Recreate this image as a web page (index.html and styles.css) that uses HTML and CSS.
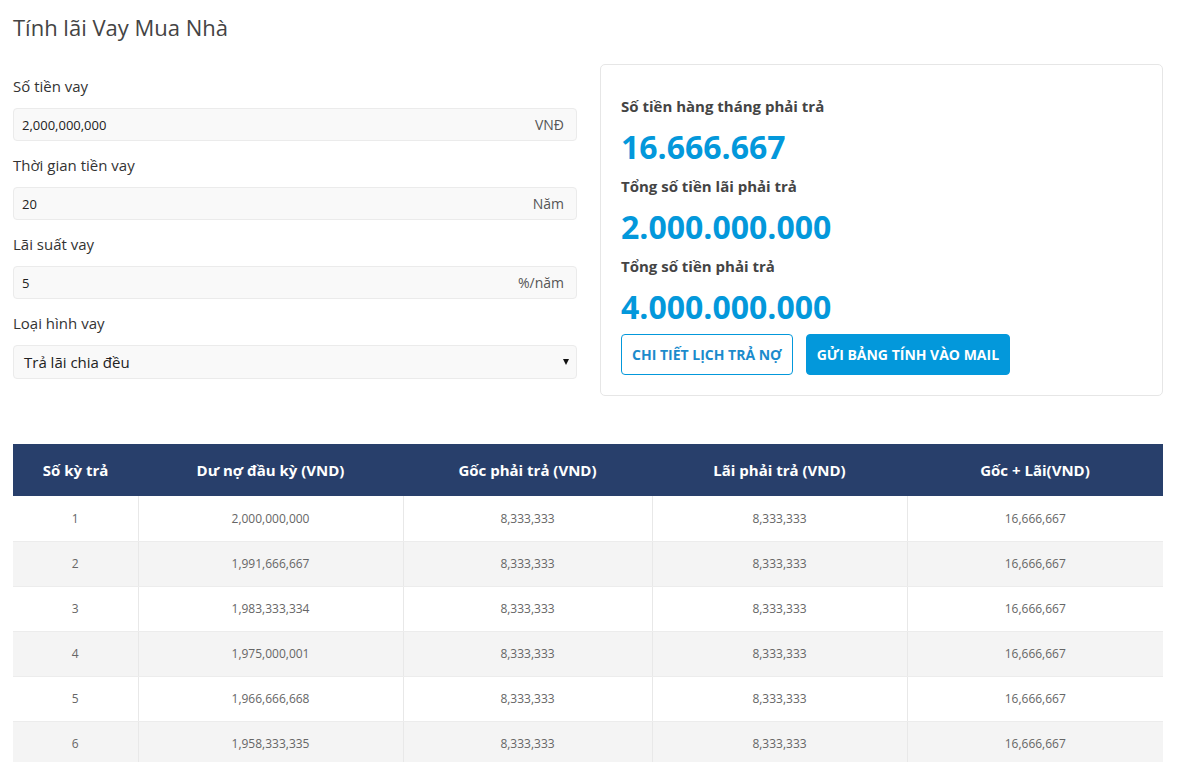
FILE: index.html
```html
<!DOCTYPE html>
<html lang="vi">
<head>
<meta charset="utf-8">
<title>Tính lãi Vay Mua Nhà</title>
<link rel="stylesheet" href="styles.css">
</head>
<body>
<div class="page">
  <h1 class="title">Tính lãi Vay Mua Nhà</h1>
  <div class="calc">
    <div class="form">
      <div class="field">
        <label class="label">Số tiền vay</label>
        <div class="input"><span class="value">2,000,000,000</span><span class="unit">VNĐ</span></div>
      </div>
      <div class="field">
        <label class="label">Thời gian tiền vay</label>
        <div class="input"><span class="value">20</span><span class="unit">Năm</span></div>
      </div>
      <div class="field">
        <label class="label">Lãi suất vay</label>
        <div class="input"><span class="value">5</span><span class="unit">%/năm</span></div>
      </div>
      <div class="field">
        <label class="label">Loại hình vay</label>
        <div class="select"><span class="select-value">Trả lãi chia đều</span><span class="caret"></span></div>
      </div>
    </div>
    <div class="card">
      <div class="res-label">Số tiền hàng tháng phải trả</div>
      <div class="res-value">16.666.667</div>
      <div class="res-label">Tổng số tiền lãi phải trả</div>
      <div class="res-value">2.000.000.000</div>
      <div class="res-label">Tổng số tiền phải trả</div>
      <div class="res-value last">4.000.000.000</div>
      <div class="buttons">
        <button class="btn btn-outline">CHI TIẾT LỊCH TRẢ NỢ</button>
        <button class="btn btn-solid">GỬI BẢNG TÍNH VÀO MAIL</button>
      </div>
    </div>
  </div>
  <table class="schedule">
    <colgroup>
      <col class="c1"><col class="c2"><col class="c3"><col class="c4"><col class="c5">
    </colgroup>
    <thead>
      <tr><th>Số kỳ trả</th><th>Dư nợ đầu kỳ (VND)</th><th>Gốc phải trả (VND)</th><th>Lãi phải trả (VND)</th><th>Gốc + Lãi(VND)</th></tr>
    </thead>
    <tbody>
      <tr><td>1</td><td>2,000,000,000</td><td>8,333,333</td><td>8,333,333</td><td>16,666,667</td></tr>
      <tr><td>2</td><td>1,991,666,667</td><td>8,333,333</td><td>8,333,333</td><td>16,666,667</td></tr>
      <tr><td>3</td><td>1,983,333,334</td><td>8,333,333</td><td>8,333,333</td><td>16,666,667</td></tr>
      <tr><td>4</td><td>1,975,000,001</td><td>8,333,333</td><td>8,333,333</td><td>16,666,667</td></tr>
      <tr><td>5</td><td>1,966,666,668</td><td>8,333,333</td><td>8,333,333</td><td>16,666,667</td></tr>
      <tr><td>6</td><td>1,958,333,335</td><td>8,333,333</td><td>8,333,333</td><td>16,666,667</td></tr>
    </tbody>
  </table>
</div>
</body>
</html>
```
FILE: styles.css
```css
* { box-sizing: border-box; }
html, body { margin: 0; padding: 0; background: #fff; }
body {
  font-family: "Open Sans", "Liberation Sans", Arial, sans-serif;
  color: #333;
}
.page { padding: 0 18px 0 13px; }
.title {
  margin: 12px 0 0;
  font-size: 22px;
  line-height: 30px;
  font-weight: 400;
  color: #444;
}
.calc {
  display: grid;
  grid-template-columns: 564px 563px;
  column-gap: 23px;
  margin-top: 22px;
  align-items: start;
}
.form { padding-top: 11px; }
.field { margin-bottom: 13px; }
.label {
  display: block;
  font-size: 15px;
  line-height: 22px;
  color: #333;
  margin-bottom: 11px;
}
.input, .select {
  display: flex;
  align-items: center;
  justify-content: space-between;
  height: 33px;
  background: #f9f9f9;
  border: 1px solid #ebebeb;
  border-radius: 4px;
  padding: 0 12px 0 8px;
}
.value { font-size: 13px; color: #222; }
.unit { font-size: 14px; color: #555; }
.select { height: 34px; padding: 0 6px 0 10px; }
.select-value { font-size: 15px; color: #222; }
.caret {
  width: 0; height: 0;
  border-left: 3.5px solid transparent;
  border-right: 3.5px solid transparent;
  border-top: 6px solid #111;
  margin-right: 1px;
}
.card {
  border: 1px solid #e6e6e6;
  border-radius: 5px;
  padding: 30px 20px 19px;
  height: 332px;
}
.res-label {
  font-size: 15px;
  line-height: 22px;
  font-weight: 700;
  color: #444;
  margin-bottom: 8px;
}
.res-value {
  font-size: 32px;
  line-height: 44px;
  font-weight: 700;
  color: #0398db;
  margin-bottom: 6px;
}
.res-value.last { margin-bottom: 5px; }
.buttons { display: flex; gap: 13px; }
.btn {
  font-family: inherit;
  height: 41px;
  font-size: 14px;
  font-weight: 700;
  border-radius: 4px;
  padding: 0 10px;
  cursor: pointer;
}
.btn-outline {
  background: #fff;
  border: 1px solid #0398db;
  color: #1b8bcc;
}
.btn-solid {
  background: #0398db;
  border: 1px solid #0398db;
  color: #fff;
}
.schedule {
  width: 1150px;
  margin-top: 48px;
  border-collapse: collapse;
  table-layout: fixed;
}
.c1 { width: 125px; }
.c2 { width: 265px; }
.c3 { width: 249px; }
.c4 { width: 255px; }
.c5 { width: 256px; }
.schedule th {
  background: #283f6b;
  color: #fff;
  height: 52px;
  font-size: 15px;
  font-weight: 700;
  text-align: center;
  padding: 0;
}
.schedule td {
  height: 45px;
  font-size: 12px;
  color: #666;
  text-align: center;
  padding: 0;
  border-left: 1px solid #e8e8e8;
  border-bottom: 1px solid #ececec;
}
.schedule td:first-child { border-left: none; }
.schedule tbody tr:nth-child(even) td { background: #f4f4f4; }
```
